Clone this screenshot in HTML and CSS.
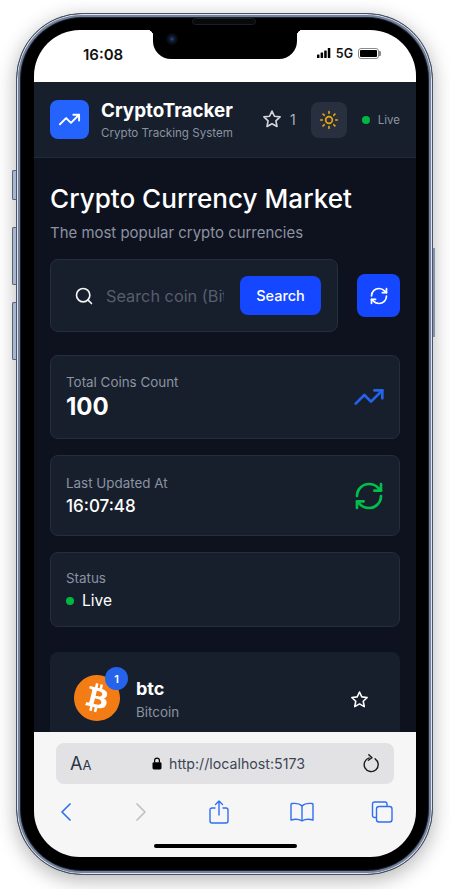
FILE: index.html
```html
<!DOCTYPE html>
<html lang="en">
<head>
    <meta charset="UTF-8">
    <meta name="viewport" content="width=device-width, initial-scale=1.0">
    <title>CryptoTracker</title>
    <link rel="stylesheet" href="styles.css">
</head>
<body>

    <div class="phone">
        <!-- Hardware buttons -->
        <span class="side-btn mute"></span>
        <span class="side-btn vol-up"></span>
        <span class="side-btn vol-down"></span>
        <span class="power-btn"></span>

        <div class="notch">
            <span class="speaker"></span>
            <span class="camera"></span>
        </div>

        <div class="screen">
            <!-- Status bar -->
            <div class="status-bar">
                <span class="clock">16:08</span>
                <div class="status-icons">
                    <svg class="signal" width="14" height="10" viewBox="0 0 14 10"><rect x="0" y="6.5" width="2.5" height="3.5" rx=".5"/><rect x="3.6" y="4.5" width="2.5" height="5.5" rx=".5"/><rect x="7.2" y="2.5" width="2.5" height="7.5" rx=".5"/><rect x="10.8" y="0" width="2.5" height="10" rx=".5"/></svg>
                    <span class="net">5G</span>
                    <span class="battery"><span class="battery-fill"></span></span>
                </div>
            </div>

            <!-- App header -->
            <header class="app-header">
                <div class="logo">
                    <svg width="23" height="23" viewBox="0 0 24 24" fill="none" stroke="#fff" stroke-width="2" stroke-linecap="round" stroke-linejoin="round"><path d="M22 7l-8.5 8.5-5-5L2 17"/><path d="M16 7h6v6"/></svg>
                </div>
                <div class="brand">
                    <div class="brand-name">CryptoTracker</div>
                    <div class="brand-sub">Crypto Tracking System</div>
                </div>
                <div class="fav-count">
                    <svg width="20" height="20" viewBox="0 0 24 24" fill="none" stroke="#d1d5db" stroke-width="2" stroke-linejoin="round"><path d="M12 2.500l2.900 6.200 6.800.8-5 4.700 1.300 6.800-6-3.400-6 3.400 1.300-6.800-5-4.700 6.800-.8z"/></svg>
                    <span>1</span>
                </div>
                <button class="theme-btn">
                    <svg width="20" height="20" viewBox="0 0 24 24" fill="none" stroke="#eaa80c" stroke-width="2" stroke-linecap="round"><circle cx="12" cy="12" r="4"/><path d="M12 2v2M12 20v2M4.900 4.900l1.400 1.400M17.700 17.700l1.400 1.400M2 12h2M20 12h2M6.300 17.700l-1.400 1.400M19.100 4.900l-1.400 1.400"/></svg>
                </button>
                <div class="live-tag"><span class="dot"></span>Live</div>
            </header>

            <!-- Page content -->
            <main class="content">
                <h1 class="page-title">Crypto Currency Market</h1>
                <p class="page-sub">The most popular crypto currencies</p>

                <div class="search-row">
                    <div class="search-box">
                        <svg width="20" height="20" viewBox="0 0 24 24" fill="none" stroke="#f3f4f6" stroke-width="2" stroke-linecap="round"><circle cx="11" cy="11" r="8"/><path d="M21 21l-4.300-4.300"/></svg>
                        <input class="search-input" type="text" placeholder="Search coin (Bitcoin, Ethereum...)">
                        <button class="search-btn">Search</button>
                    </div>
                    <button class="refresh-btn">
                        <svg width="20" height="20" viewBox="0 0 24 24" fill="none" stroke="#fff" stroke-width="2" stroke-linecap="round" stroke-linejoin="round"><path d="M3 12a9 9 0 0 1 9-9 9.750 9.750 0 0 1 6.740 2.740L21 8"/><path d="M21 3v5h-5"/><path d="M21 12a9 9 0 0 1-9 9 9.750 9.750 0 0 1-6.740-2.740L3 16"/><path d="M8 16H3v5"/></svg>
                    </button>
                </div>

                <div class="stat-card stat-total">
                    <div>
                        <div class="stat-label">Total Coins Count</div>
                        <div class="stat-big">100</div>
                    </div>
                    <svg class="total-icon" width="32" height="32" viewBox="0 0 24 24" fill="none" stroke="#2563eb" stroke-width="2" stroke-linecap="round" stroke-linejoin="round"><path d="M22 7l-8.500 8.500-5-5L2 17"/><path d="M16 7h6v6"/></svg>
                </div>

                <div class="stat-card stat-updated">
                    <div>
                        <div class="stat-label">Last Updated At</div>
                        <div class="stat-value">16:07:48</div>
                    </div>
                    <svg width="32" height="32" viewBox="0 0 24 24" fill="none" stroke="#00c04b" stroke-width="2" stroke-linecap="round" stroke-linejoin="round"><path d="M3 12a9 9 0 0 1 9-9 9.750 9.750 0 0 1 6.740 2.740L21 8"/><path d="M21 3v5h-5"/><path d="M21 12a9 9 0 0 1-9 9 9.750 9.750 0 0 1-6.740-2.740L3 16"/><path d="M8 16H3v5"/></svg>
                </div>

                <div class="stat-card stat-status">
                    <div>
                        <div class="stat-label">Status</div>
                        <div class="stat-live"><span class="dot"></span>Live</div>
                    </div>
                </div>

                <div class="coin-card">
                    <div class="coin-icon">
                        <svg width="46" height="46" viewBox="0 0 24 24" fill="#f47c14"><path d="M23.638 14.904c-1.602 6.430-8.113 10.340-14.542 8.736C2.670 22.050-1.244 15.525.362 9.105 1.962 2.670 8.475-1.243 14.900.358c6.430 1.605 10.342 8.115 8.738 14.548v-.002zm-6.350-4.613c.24-1.590-.974-2.450-2.640-3.030l.54-2.153-1.315-.33-.525 2.107c-.345-.087-.705-.167-1.064-.25l.526-2.127-1.320-.33-.54 2.165c-.285-.067-.565-.132-.84-.2l-1.815-.45-.35 1.407s.975.225.955.236c.535.136.63.486.615.766l-1.477 5.920c-.075.166-.24.406-.614.314.015.02-.96-.24-.96-.24l-.66 1.510 1.710.426.93.242-.54 2.190 1.320.327.54-2.170c.36.1.705.19 1.050.273l-.51 2.154 1.320.33.545-2.190c2.240.427 3.930.257 4.640-1.774.57-1.637-.03-2.580-1.217-3.196.854-.193 1.500-.76 1.680-1.930h.01zm-3.010 4.220c-.404 1.640-3.157.75-4.050.53l.72-2.900c.896.23 3.757.67 3.330 2.370zm.41-4.240c-.37 1.490-2.662.735-3.405.55l.654-2.640c.744.18 3.137.524 2.750 2.084v.006z"/></svg>
                        <span class="coin-badge">1</span>
                    </div>
                    <div class="coin-names">
                        <div class="coin-symbol">btc</div>
                        <div class="coin-name">Bitcoin</div>
                    </div>
                    <svg class="coin-star" width="19" height="19" viewBox="0 0 24 24" fill="none" stroke="#fff" stroke-width="2" stroke-linejoin="round"><path d="M12 2.500l2.900 6.200 6.800.8-5 4.700 1.300 6.800-6-3.400-6 3.400 1.300-6.800-5-4.700 6.800-.8z"/></svg>
                </div>
            </main>

            <!-- Safari toolbar -->
            <div class="browser-bar">
                <div class="url-bar">
                    <span class="aa"><span class="aa-big">A</span><span class="aa-small">A</span></span>
                    <div class="url">
                        <svg width="10" height="13" viewBox="0 0 10 13"><path d="M2.600 5.500V3.600a2.400 2.400 0 0 1 4.800 0v1.900" fill="none" stroke="#000" stroke-width="1.200"/><rect x="0.500" y="5.200" width="9" height="7.300" rx="1.400"/></svg>
                        <span>http://localhost:5173</span>
                    </div>
                    <svg width="20" height="20" viewBox="0 0 20 20" fill="none" stroke="#1a1a1a" stroke-width="1.400" stroke-linecap="round" stroke-linejoin="round"><path d="M8.200 3.900a7 7 0 1 0 5.900.9"/><path d="M7.800 0.800l3.200 3-3.600 2.500"/></svg>
                </div>
                <nav class="nav-row">
                    <svg width="14" height="20" viewBox="0 0 14 20" fill="none" stroke="#2f6ff2" stroke-width="1.700" stroke-linecap="round" stroke-linejoin="round"><path d="M11 2L3 10l8 8"/></svg>
                    <svg width="14" height="20" viewBox="0 0 14 20" fill="none" stroke="#c0c0c4" stroke-width="1.700" stroke-linecap="round" stroke-linejoin="round"><path d="M3 2l8 8-8 8"/></svg>
                    <svg width="20" height="24" viewBox="0 0 20 24" fill="none" stroke="#2f6ff2" stroke-width="1.400" stroke-linecap="round" stroke-linejoin="round"><path d="M6 8H3a2 2 0 0 0-2 2v11a2 2 0 0 0 2 2h14a2 2 0 0 0 2-2V10a2 2 0 0 0-2-2h-3"/><path d="M10 15V1M6.500 4.500L10 1l3.500 3.500"/></svg>
                    <svg width="24" height="20" viewBox="0 0 24 20" fill="none" stroke="#2f6ff2" stroke-width="1.400" stroke-linejoin="round"><path d="M12 4C10 2 6 1 2 1.500c-.6.1-1 .5-1 1V18c3-.8 8-.8 11 .8 3-1.600 8-1.600 11-.8V2.500c0-.5-.4-.9-1-1C18 1 14 2 12 4z"/><path d="M12 4v14.800"/></svg>
                    <svg class="tabs-icon" width="22" height="22" viewBox="0 0 22 22" fill="none" stroke="#2f6ff2" stroke-width="1.400"><path d="M5 16.500H3.500a2 2 0 0 1-2-2V3a2 2 0 0 1 2-2H14a2 2 0 0 1 2 2v2"/><rect x="5.500" y="5.500" width="15.500" height="15.500" rx="2.500"/></svg>
                </nav>
                <div class="home-bar"></div>
            </div>
        </div>
    </div>

</body>
</html>
```

FILE: styles.css
```css
* {
    box-sizing: border-box;
    margin: 0;
    padding: 0;
}
html, body {
    width: 450px;
    height: 889px;
    overflow: hidden;
}
body {
    background-color: #ffffff;
    font-family: Inter, "Liberation Sans", sans-serif;
    padding: 13px 0 0 16px;
}
button {
    border: none;
    font-family: inherit;
    display: flex;
    align-items: center;
    justify-content: center;
}

/* Phone frame */
.phone {
    position: relative;
    width: 417px;
    height: 862px;
    padding: 16px 16px 17px 17px;
    background-color: #000;
    border: 1px solid #46536a;
    border-radius: 66px;
    box-shadow: inset 0 0 0 1px #dfe3ea, inset 0 0 0 3px #74839c, inset 0 0 0 4px #1a2130, 0 5px 20px rgba(0, 0, 0, 0.3);
}
.side-btn {
    position: absolute;
    left: -5px;
    width: 4px;
    background-color: #a9b5c9;
    border: 1px solid #56647d;
    border-right: none;
    border-radius: 2px 0 0 2px;
}
.mute { top: 156px; height: 30px; }
.vol-up { top: 213px; height: 58px; }
.vol-down { top: 288px; height: 58px; }
.power-btn {
    position: absolute;
    right: -3px;
    top: 234px;
    width: 2px;
    height: 89px;
    background-color: #8592a8;
}
.notch {
    position: absolute;
    top: 4px;
    left: 136px;
    width: 144px;
    height: 41px;
    background-color: #000;
    border-radius: 0 0 18px 18px;
    z-index: 2;
}
/* little fillets where the notch meets the screen's top edge */
.notch::before,
.notch::after {
    content: "";
    position: absolute;
    top: 12px;
    width: 6px;
    height: 6px;
}
.notch::before {
    left: -6px;
    background: radial-gradient(circle at 0 100%, transparent 6px, #000 6.500px);
}
.notch::after {
    right: -6px;
    background: radial-gradient(circle at 100% 100%, transparent 6px, #000 6.500px);
}
.speaker {
    position: absolute;
    top: 0;
    left: 39px;
    width: 64px;
    height: 7px;
    background-color: #08090b;
    border: 1px solid #1b1e23;
    border-radius: 4px;
}
.camera {
    position: absolute;
    top: 15px;
    left: 13px;
    width: 12px;
    height: 12px;
    background: radial-gradient(circle, #2b4a8c 0, #12203c 25%, #07090f 60%);
    border-radius: 50%;
}
.screen {
    width: 382px;
    height: 827px;
    border-radius: 46px;
    overflow: hidden;
    display: flex;
    flex-direction: column;
    background-color: #0e121e;
}

/* Status bar */
.status-bar {
    flex: 0 0 52px;
    background-color: #fff;
    display: flex;
    justify-content: space-between;
    align-items: flex-start;
    padding: 16px 35px 0 49px;
    color: #111;
}
.clock {
    font-size: 15px;
    font-weight: 600;
    line-height: 18px;
}
.status-icons {
    display: flex;
    align-items: center;
    gap: 5px;
    height: 14px;
}
.net {
    font-size: 12.500px;
    font-weight: 600;
}
.battery {
    position: relative;
    width: 21px;
    height: 11px;
    border: 1px solid #8a8a8a;
    border-radius: 3px;
    padding: 1px;
    display: block;
    margin-right: 2px;
}
.battery::after {
    content: "";
    position: absolute;
    right: -3px;
    top: 2px;
    width: 2px;
    height: 5px;
    background-color: #8a8a8a;
    border-radius: 0 1px 1px 0;
}
.battery-fill {
    display: block;
    height: 100%;
    background-color: #000;
    border-radius: 1px;
}

/* App header */
.app-header {
    flex: 0 0 76px;
    display: flex;
    align-items: center;
    padding: 0 16px;
    background-color: #171f2d;
    border-bottom: 1px solid #212a39;
}
.logo {
    width: 39px;
    height: 39px;
    border-radius: 8px;
    background-color: #2563ff;
    display: flex;
    align-items: center;
    justify-content: center;
    margin-right: 12px;
}
.brand {
    flex: 1;
    padding-top: 2px;
}
.brand-name {
    color: #fff;
    font-size: 18.800px;
    font-weight: 700;
    line-height: 24px;
}
.brand-sub {
    color: #8b93a1;
    font-size: 11.600px;
    line-height: 18px;
    margin-top: 1px;
}
.fav-count {
    display: flex;
    align-items: center;
    gap: 8px;
    color: #aab1bd;
    font-size: 14px;
    margin-right: 15px;
    margin-bottom: 1px;
}
.theme-btn {
    width: 36px;
    height: 36px;
    border-radius: 8px;
    background-color: #283040;
    margin-right: 15px;
}
.live-tag {
    display: flex;
    align-items: center;
    gap: 8px;
    color: #8b93a1;
    font-size: 11.500px;
}
.dot {
    width: 8px;
    height: 8px;
    border-radius: 50%;
    background-color: #00b83f;
    display: inline-block;
}

/* Page content */
.content {
    flex: 1;
    min-height: 0;
    overflow: hidden;
    padding: 23px 16px 0;
}
.page-title {
    color: #fff;
    font-size: 26.100px;
    font-weight: 500;
    line-height: 36px;
}
.page-sub {
    color: #8b93a1;
    font-size: 14.950px;
    line-height: 24px;
    margin-top: 4px;
}
.search-row {
    display: flex;
    align-items: center;
    gap: 19px;
    margin-top: 14px;
}
.search-box {
    flex: 1;
    min-width: 0;
    height: 73px;
    display: flex;
    align-items: center;
    padding: 0 16px 0 23px;
    background-color: #171f2d;
    border: 1px solid #252e3d;
    border-radius: 8px;
}
.search-input {
    flex: 1;
    min-width: 0;
    margin-left: 12px;
    margin-right: 16px;
    background: none;
    border: none;
    outline: none;
    font-family: inherit;
    font-size: 16.300px;
    color: #fff;
}
.search-input::placeholder {
    color: #565e6e;
    opacity: 1;
}
.search-btn {
    flex: 0 0 81px;
    height: 39px;
    background-color: #1447ff;
    color: #fff;
    font-size: 14.500px;
    font-weight: 500;
    border-radius: 8px;
}
.refresh-btn {
    flex: 0 0 43px;
    height: 43px;
    background-color: #1447ff;
    border-radius: 8px;
}

/* Stat cards */
.stat-card {
    display: flex;
    justify-content: space-between;
    align-items: center;
    padding: 0 14px 0 15px;
    background-color: #171f2d;
    border: 1px solid #252e3d;
    border-radius: 8px;
    margin-top: 16px;
}
.stat-total { height: 84px; margin-top: 23px; padding-top: 2px; }
.stat-updated { height: 81px; }
.stat-status { height: 75px; padding-top: 2px; }
.total-icon { margin-top: -2px; }
.stat-label {
    color: #8b93a1;
    font-size: 13.400px;
    line-height: 18px;
}
.stat-big {
    color: #fff;
    font-size: 24px;
    font-weight: 700;
    line-height: 32px;
}
.stat-value {
    color: #fff;
    font-size: 17px;
    font-weight: 500;
    line-height: 24px;
    margin-top: 2px;
}
.stat-live {
    display: flex;
    align-items: center;
    gap: 8px;
    color: #fff;
    font-size: 15.500px;
    font-weight: 400;
    line-height: 24px;
    margin-top: 2px;
}

/* Coin card */
.coin-card {
    display: flex;
    align-items: center;
    height: 94px;
    margin-top: 25px;
    padding: 0 31px 0 24px;
    background-color: #171f2d;
    border-radius: 8px;
}
.coin-icon {
    position: relative;
    width: 46px;
    height: 46px;
    margin-right: 16px;
    background: radial-gradient(circle, #fff 60%, transparent 61%);
    align-self: flex-start;
    margin-top: 23px;
}
.coin-icon svg {
    display: block;
}
.coin-badge {
    position: absolute;
    top: -8px;
    right: -8px;
    width: 23px;
    height: 23px;
    border-radius: 50%;
    background-color: #2563eb;
    color: #fff;
    font-size: 11px;
    font-weight: 600;
    display: flex;
    align-items: center;
    justify-content: center;
}
.coin-names {
    flex: 1;
    align-self: flex-start;
    margin-top: 24px;
}
.coin-symbol {
    color: #fff;
    font-size: 18px;
    font-weight: 700;
    line-height: 26px;
}
.coin-name {
    color: #8b93a1;
    font-size: 13.400px;
    line-height: 20px;
}

/* Safari toolbar */
.browser-bar {
    flex: 0 0 125px;
    background-color: #f6f6f6;
    padding: 11px 22px 0;
    display: flex;
    flex-direction: column;
    align-items: stretch;
    position: relative;
}
.url-bar {
    height: 41px;
    background-color: #e2e2e4;
    border-radius: 8px;
    display: flex;
    align-items: center;
    padding: 0 13px 0 14px;
}
.aa {
    color: #2c3547;
    line-height: 1;
    width: 70px;
}
.aa-big { font-size: 18px; }
.aa-small { font-size: 13px; }
.url {
    flex: 1;
    display: flex;
    align-items: center;
    gap: 7px;
    color: #3d4657;
    font-size: 14.200px;
    margin-left: 12px;
}
.nav-row {
    display: flex;
    align-items: center;
    gap: 61px;
    padding-left: 3px;
    margin-top: 14px;
    height: 28px;
}
.tabs-icon {
    margin-left: -4px;
}
.home-bar {
    position: absolute;
    left: 120px;
    bottom: 9px;
    width: 143px;
    height: 4px;
    background-color: #000;
    border-radius: 2px;
}
```
